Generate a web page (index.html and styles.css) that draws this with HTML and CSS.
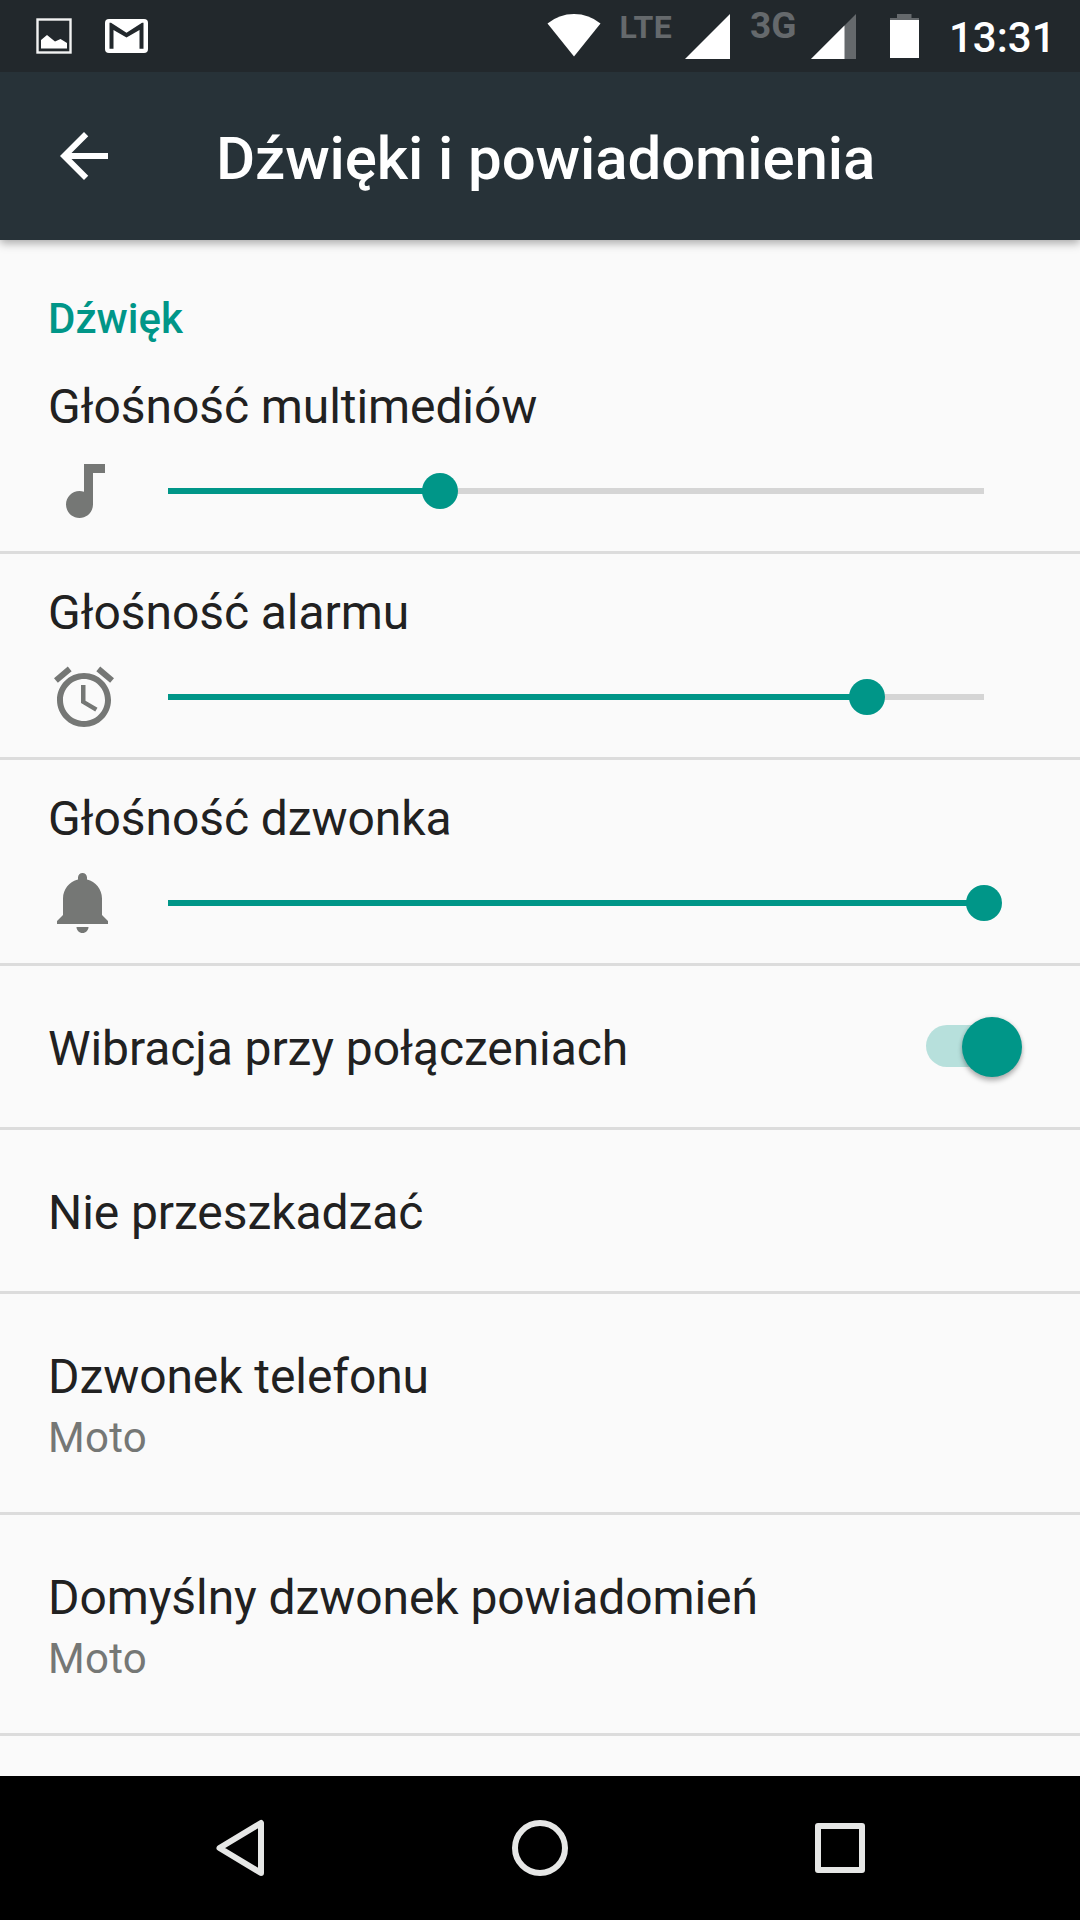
FILE: index.html
```html
<!DOCTYPE html>
<html lang="pl">
<head>
<meta charset="utf-8">
<title>Dźwięki i powiadomienia</title>
<link rel="stylesheet" href="styles.css">
</head>
<body>
<div class="screen">
  <header class="status-bar">
    <div class="status-left">
      <svg class="icon-image" width="36" height="36" viewBox="0 0 36 36">
        <rect x="1.500" y="1.500" width="33" height="33" fill="none" stroke="#f2f3f3" stroke-width="2.400"/>
        <path d="M5 30.500V22l6-5 8 6.500 5.500-2.500 6.500 4v5.500z" fill="#fff"/>
      </svg>
      <svg class="icon-mail" width="43" height="34" viewBox="0 0 43 34">
        <rect width="43" height="34" rx="4" fill="#fff"/>
        <path d="M4.500 3.700H6L21.500 13.700 37 3.700H38.500V29.700H34.500V11L21.500 18.500 8.500 11V29.700H4.500z" fill="#22282c"/>
      </svg>
    </div>
    <div class="status-right">
      <svg class="icon-wifi" width="54" height="44" viewBox="0 0 54 44">
        <path d="M0.500 10.500Q12 1 27 1T53.500 10.500L27 43.500z" fill="#fff"/>
      </svg>
      <span class="network network-lte">LTE</span>
      <svg class="icon-signal" width="45" height="45" viewBox="0 0 45 45"><path d="M45 0V45H0z" fill="#fff"/></svg>
      <span class="network network-3g">3G</span>
      <svg class="icon-signal" width="45" height="45" viewBox="0 0 45 45"><path d="M45 0V45H0z" fill="#65696c"/><path d="M33.500 11.500V45H0z" fill="#fff"/></svg>
      <svg class="icon-battery" width="29" height="44" viewBox="0 0 29 44"><path d="M7 0H21.500V4H29V10H0V4H7z" fill="#65696c"/><path d="M0 6H29V44H0z" fill="#fff"/></svg>
      <span class="clock">13:31</span>
    </div>
  </header>

  <div class="app-bar">
    <svg class="back" viewBox="0 0 24 24"><path d="M20 11H7.830l5.590-5.590L12 4l-8 8 8 8 1.410-1.410L7.830 13H20v-2z" fill="#fff"/></svg>
    <h1 class="title">Dźwięki i powiadomienia</h1>
  </div>

  <main class="settings">
    <h2 class="category">Dźwięk</h2>

    <section class="row row-slider">
      <div class="label">Głośność multimediów</div>
      <div class="volume">
        <svg class="icon" viewBox="0 0 24 24"><path d="M12 3v9.280c-.47-.17-.97-.28-1.500-.28C8.010 12 6 14.010 6 16.500S8.010 21 10.500 21 15 18.990 15 16.500V6h4V3h-7z"/></svg>
        <div class="track"><div class="fill" style="width:33.333%"><span class="thumb"></span></div></div>
      </div>
    </section>

    <section class="row row-slider">
      <div class="label">Głośność alarmu</div>
      <div class="volume">
        <svg class="icon" viewBox="0 0 24 24"><path d="M22 5.720l-4.600-3.860-1.290 1.530 4.600 3.860L22 5.720zM7.880 3.390L6.600 1.860 2 5.710l1.290 1.530 4.590-3.850zM12.500 8H11v6l4.750 2.850.75-1.230-4-2.370V8zM12 4c-4.970 0-9 4.030-9 9s4.020 9 9 9c4.970 0 9-4.030 9-9s-4.030-9-9-9zm0 16c-3.870 0-7-3.130-7-7s3.130-7 7-7 7 3.130 7 7-3.130 7-7 7z"/></svg>
        <div class="track"><div class="fill" style="width:85.66%"><span class="thumb"></span></div></div>
      </div>
    </section>

    <section class="row row-slider">
      <div class="label">Głośność dzwonka</div>
      <div class="volume">
        <svg class="icon" viewBox="0 0 24 24"><path d="M11.500 22c1.100 0 2-.9 2-2h-4c0 1.100.9 2 2 2zm6.500-6v-5.500c0-3.070-2.130-5.640-5-6.320V3.500c0-.83-.67-1.500-1.500-1.500S10 2.670 10 3.500v.68c-2.870.68-5 3.250-5 6.320V16l-2 2v1h17v-1l-2-2z"/></svg>
        <div class="track"><div class="fill" style="width:100%"><span class="thumb"></span></div></div>
      </div>
    </section>

    <section class="row row-switch">
      <div class="label">Wibracja przy połączeniach</div>
      <div class="switch"><span class="knob"></span></div>
    </section>

    <section class="row row-single">
      <div class="label">Nie przeszkadzać</div>
    </section>

    <section class="row">
      <div class="label">Dzwonek telefonu</div>
      <div class="summary">Moto</div>
    </section>

    <section class="row">
      <div class="label">Domyślny dzwonek powiadomień</div>
      <div class="summary">Moto</div>
    </section>
  </main>

  <nav class="nav-bar">
    <svg class="nav-icon" viewBox="0 0 60 60"><path d="M51 5V55L9.500 30z"/></svg>
    <svg class="nav-icon" viewBox="0 0 60 60"><circle cx="30" cy="30" r="25"/></svg>
    <svg class="nav-icon" viewBox="0 0 60 60"><rect x="8" y="8" width="44" height="44"/></svg>
  </nav>
</div>
</body>
</html>
```

FILE: styles.css
```css
* {
  box-sizing: border-box;
}

body {
  margin: 0;
  font-family: Roboto, sans-serif;
  background: #fafafa;
}

svg {
  display: block;
  flex: none;
}

.screen {
  width: 1080px;
  height: 1920px;
  display: flex;
  flex-direction: column;
  overflow: hidden;
}

/* Status bar */
.status-bar {
  flex: none;
  height: 72px;
  display: flex;
  justify-content: space-between;
  align-items: flex-start;
  background: #22282c;
  color: #fff;
}

.status-left {
  display: flex;
  gap: 32.500px;
  padding: 18px 0 0 36px;
}

.icon-mail {
  margin-top: 1px;
}

.status-right {
  display: flex;
  align-items: flex-start;
  padding-right: 28px;
}

.icon-wifi {
  margin-top: 13px;
}

.network {
  font-weight: 700;
  line-height: 40px;
  color: #65696c;
  white-space: nowrap;
}

.network-lte {
  width: 84px;
  padding-left: 18.500px;
  margin-top: 7px;
  font-size: 32px;
  letter-spacing: 0.3px;
}

.network-3g {
  width: 81px;
  padding-left: 20px;
  margin-top: 6px;
  font-size: 37px;
}

.icon-signal {
  margin-top: 14px;
}

.icon-battery {
  margin: 14px 0 0 34px;
}

.clock {
  width: 133px;
  padding-left: 30px;
  margin-top: 13px;
  font-size: 42px;
  font-weight: 500;
  line-height: 50px;
}

/* App bar */
.app-bar {
  flex: none;
  height: 168px;
  display: flex;
  align-items: center;
  gap: 96px;
  padding-left: 48px;
  background: #273238;
  box-shadow: 0 3px 9px rgba(0, 0, 0, 0.34);
  clip-path: inset(0 0 -20px 0);
  z-index: 1;
}

.back {
  width: 72px;
  height: 72px;
}

.title {
  margin: 0;
  padding-top: 5px;
  font-size: 60px;
  line-height: 70px;
  font-weight: 500;
  letter-spacing: -0.1px;
  color: #fff;
}

/* Settings list */
.settings {
  flex: 1;
  min-height: 0;
}

.category {
  margin: 0;
  padding: 54px 48px 4px;
  font-size: 42px;
  line-height: 50px;
  font-weight: 500;
  color: #009688;
}

.row {
  padding: 55px 48px 49px;
  border-bottom: 3px solid #dcdcdc;
}

.label {
  font-size: 48px;
  line-height: 56px;
  letter-spacing: -0.08px;
  color: #212121;
}

.summary {
  margin-top: 8px;
  font-size: 42px;
  line-height: 50px;
  letter-spacing: 0.3px;
  color: #757775;
}

.row-single,
.row-switch {
  padding-bottom: 50px;
}

.row-slider {
  padding: 31px 96px 24px 48px;
}

.volume {
  display: flex;
  align-items: center;
  gap: 48px;
  margin-top: 20px;
}

.icon {
  width: 72px;
  height: 72px;
  fill: #757775;
}

.track {
  flex: 1;
  height: 6px;
  background: #d5d5d5;
}

.fill {
  position: relative;
  height: 6px;
  background: #009688;
}

.thumb {
  position: absolute;
  top: -15px;
  right: -18px;
  width: 36px;
  height: 36px;
  border-radius: 50%;
  background: #009688;
}

.row-switch {
  display: flex;
  justify-content: space-between;
  align-items: flex-start;
}

.switch {
  position: relative;
  width: 84px;
  height: 42px;
  margin: 4px 22px 0 0;
  border-radius: 21px;
  background: #b7e0dc;
}

.knob {
  position: absolute;
  top: -8.500px;
  left: 35.500px;
  width: 60px;
  height: 60px;
  border-radius: 50%;
  background: #009688;
  box-shadow: 0 4px 5px rgba(0, 0, 0, 0.26), 0 0 4px rgba(0, 0, 0, 0.12);
}

/* Navigation bar */
.nav-bar {
  flex: none;
  height: 144px;
  display: flex;
  justify-content: center;
  align-items: center;
  gap: 240px;
  background: #000;
}

.nav-icon {
  width: 60px;
  height: 60px;
  fill: none;
  stroke: #e6e7e6;
  stroke-width: 6;
  stroke-linejoin: round;
}
```
